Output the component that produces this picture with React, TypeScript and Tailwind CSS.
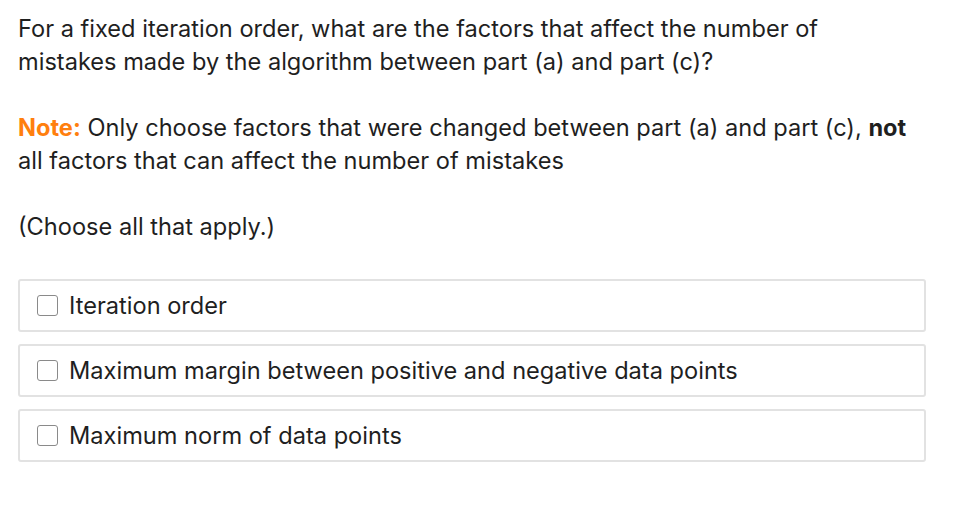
const options = [
  'Iteration order',
  'Maximum margin between positive and negative data points',
  'Maximum norm of data points',
]

export default function App() {
  return (
    <div className="min-h-screen bg-white font-['Inter',sans-serif] text-[23.6px] leading-[33px] text-[#1f1f1f]">
      <div className="w-[908px] pl-[18px] pt-[12px] box-content">
        <p>
          For a fixed iteration order, what are the factors that affect the number of
          <br />
          mistakes made by the algorithm between part (a) and part (c)?
        </p>
        <p className="mt-[33px]">
          <span className="font-bold text-[#ff7f0e]">Note:</span> Only choose factors that were changed between
          part (a) and part (c), <span className="font-bold">not</span>
          <br />
          all factors that can affect the number of mistakes
        </p>
        <p className="mt-[33px]">(Choose all that apply.)</p>
        <div className="mt-[36px] flex flex-col gap-[12px]">
          {options.map((o) => (
            <label
              key={o}
              className="flex h-[53px] items-center gap-[11px] rounded-[3px] border-2 border-[#e2e2e2] pl-[17px]"
            >
              <span className="h-[21px] w-[21px] shrink-0 rounded-[3px] border-[1.5px] border-[#8a8a8a] bg-white" />
              <span>{o}</span>
            </label>
          ))}
        </div>
      </div>
    </div>
  )
}
